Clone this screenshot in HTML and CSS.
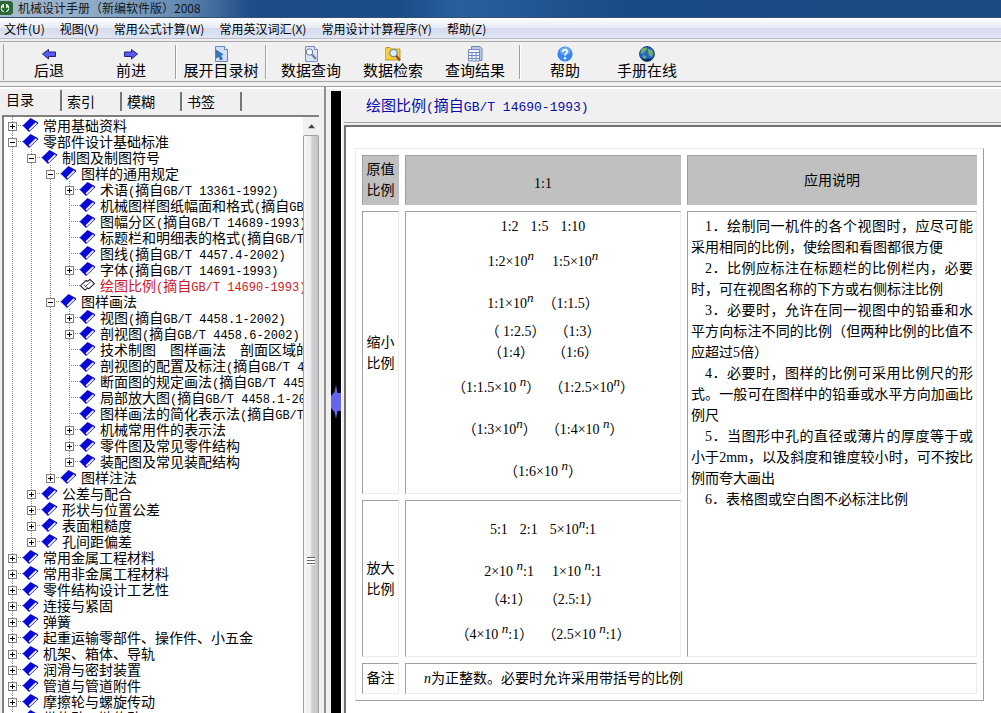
FILE: index.html
```html
<!DOCTYPE html>
<html lang="zh-CN">
<head>
<meta charset="utf-8">
<title>机械设计手册（新编软件版）2008</title>
<link rel="stylesheet" href="styles.css">
</head>
<body>
<svg class="defs" width="0" height="0" aria-hidden="true">
  <symbol id="book" viewBox="0 0 15 14">
    <path d="M7.5 0L15 4.2V5.5L6 14L0 8V7.2Z" fill="#0808d8"/>
    <path d="M6.2 11.8L13.4 4.9" stroke="#fff" stroke-width="1.7"/>
  </symbol>
  <symbol id="book-open" viewBox="0 0 16 14">
    <path d="M0.6 7.8L6.4 2.2L8 3.2L10.6 1L15.4 5.6L9.6 11L8 10.2L5.4 12.4Z" fill="#fff" stroke="#113" stroke-width="1.1"/>
    <path d="M5 9.2L11.5 3.5M8 10.2L4 6.8" stroke="#334" stroke-width="0.8" fill="none"/>
  </symbol>
</svg>

<header class="titlebar">
  <svg class="app-icon" viewBox="0 0 14 16"><path d="M0 1H11L13 3V13L11 15H0Z" fill="#2f6b3a"/><circle cx="5" cy="8" r="5" fill="#dfeedd" stroke="#153d1c"/><path d="M5 4v8M2 8l3 3 3-3" stroke="#1f6a2d" stroke-width="2" fill="none"/></svg>
  <h1>机械设计手册（新编软件版）2008</h1>
</header>

<nav class="menubar">
  <button>文件(U)</button><button>视图(V)</button><button>常用公式计算(W)</button><button>常用英汉词汇(X)</button><button>常用设计计算程序(Y)</button><button>帮助(Z)</button>
</nav>

<div class="toolbar">
  <button><svg viewBox="0 0 16 16"><path d="M1.5 8L7.5 3.5V6H14.5V10.5H7.5V13Z" fill="#5a5af0" stroke="#22227a"/></svg>后退</button>
  <button><svg viewBox="0 0 16 16"><path d="M14.5 8L8.5 3.5V6H1.5V10.5H8.5V13Z" fill="#5a5af0" stroke="#22227a"/></svg>前进</button>
  <i class="sep"></i>
  <button><svg viewBox="0 0 16 16"><path d="M2.5 .5H11.5L14.5 3.5V15.5H2.5Z" fill="#cfe0fa" stroke="#6a86bd"/><path d="M11.5 .5V3.5H14.5" fill="#fff" stroke="#6a86bd"/><path d="M3 4L10 8.5L7.5 9.2L9.5 13L7.5 14L5.8 10.3L3.5 12Z" fill="#2f78c4" stroke="#1b4f92" stroke-width=".6"/></svg>展开目录树</button>
  <i class="sep"></i>
  <button><svg viewBox="0 0 16 16"><path d="M2.5 .5H11.5L14.5 3.5V15.5H2.5Z" fill="#dce5f8" stroke="#7d8dbb"/><path d="M11.5 .5V3.5H14.5" fill="#fff" stroke="#7d8dbb"/><circle cx="6.5" cy="6" r="3.2" fill="#f4f8ff" stroke="#6b7690"/><path d="M9 8.5L13 13" stroke="#76809a" stroke-width="2.4"/></svg>数据查询</button>
  <button><svg viewBox="0 0 16 16"><path d="M0 3L1 1.5H5L6.5 3H15V13L13 14H0Z" fill="#f6ce3c" stroke="#b98912" stroke-width=".8"/><circle cx="8.5" cy="7" r="3.7" fill="#d9edfb" stroke="#7a8ba0" stroke-width="1.2"/><path d="M11.2 9.8L15 14.5" stroke="#8a4b25" stroke-width="2.2"/></svg>数据检索</button>
  <button><svg viewBox="0 0 16 16"><path d="M4.5 .5H13L15 2.5V14.5H4.5Z" fill="#b9c8ea" stroke="#7484ae"/><path d="M1.5 3.5H12.5V15H1.5Z" fill="#f3f6ff" stroke="#7a8bbb"/><path d="M1.5 6.5H12.5M1.5 9.5H12.5M1.5 12.5H12.5M5 6V15M9 6V15" stroke="#7389c4"/></svg>查询结果</button>
  <i class="sep"></i>
  <button><svg viewBox="0 0 16 16"><circle cx="8" cy="8" r="7.6" fill="#3585ee"/><ellipse cx="8" cy="5" rx="5.5" ry="4" fill="#63a9fa"/><path d="M5.7 6C5.7 2.9 10.4 3 10.3 5.8C10.2 7.4 8 7.6 8 9.6" fill="none" stroke="#fff" stroke-width="1.8"/><circle cx="8" cy="12.2" r="1.2" fill="#fff"/></svg>帮助</button>
  <button><svg viewBox="0 0 16 16"><circle cx="8" cy="8" r="7.4" fill="#2468c4" stroke="#123c74"/><path d="M3 12C5 16 11 16 13 12L8 13Z" fill="#0d2a52"/><path d="M2 4C4 1 7 1 8 2L7 5L5 6L4 8L1.5 7Z M9 3L13 4L14.5 8L12 11L10 9L9 6Z M4 9L7 10L6.5 13L4 12Z" fill="#6cae6c"/></svg>手册在线</button>
</div>

<main class="workspace">
  <section class="sidebar">
    <div class="tabs" role="tablist">
      <button role="tab" class="active" aria-selected="true">目录</button><button role="tab">索引</button><button role="tab">模糊</button><button role="tab">书签</button>
    </div>
    <div class="tree-frame">
      <div class="tree-view">
        <ul class="tree">
          <li><div class="row"><button class="tg plus" aria-label="展开"></button><svg><use href="#book"/></svg>常用基础资料</div></li>
          <li><div class="row"><button class="tg" aria-label="折叠"></button><svg><use href="#book"/></svg>零部件设计基础标准</div>
            <ul>
              <li><div class="row"><button class="tg" aria-label="折叠"></button><svg><use href="#book"/></svg>制图及制图符号</div>
                <ul>
                  <li><div class="row"><button class="tg" aria-label="折叠"></button><svg><use href="#book"/></svg>图样的通用规定</div>
                    <ul>
                      <li><div class="row"><button class="tg plus" aria-label="展开"></button><svg><use href="#book"/></svg>术语<code>(</code>摘自<code>GB/T 13361-1992)</code></div></li>
                      <li><div class="row leaf"><svg><use href="#book"/></svg>机械图样图纸幅面和格式<code>(</code>摘自<code>GB/T 14689-1993)</code></div></li>
                      <li><div class="row leaf"><svg><use href="#book"/></svg>图幅分区<code>(</code>摘自<code>GB/T 14689-1993)</code></div></li>
                      <li><div class="row leaf"><svg><use href="#book"/></svg>标题栏和明细表的格式<code>(</code>摘自<code>GB/T 10609-1989)</code></div></li>
                      <li><div class="row leaf"><svg><use href="#book"/></svg>图线<code>(</code>摘自<code>GB/T 4457.4-2002)</code></div></li>
                      <li><div class="row"><button class="tg plus" aria-label="展开"></button><svg><use href="#book"/></svg>字体<code>(</code>摘自<code>GB/T 14691-1993)</code></div></li>
                      <li><div class="row leaf current"><svg><use href="#book-open"/></svg>绘图比例<code>(</code>摘自<code>GB/T 14690-1993)</code></div></li>
                    </ul>
                  </li>
                  <li><div class="row"><button class="tg" aria-label="折叠"></button><svg><use href="#book"/></svg>图样画法</div>
                    <ul>
                      <li><div class="row"><button class="tg plus" aria-label="展开"></button><svg><use href="#book"/></svg>视图<code>(</code>摘自<code>GB/T 4458.1-2002)</code></div></li>
                      <li><div class="row"><button class="tg plus" aria-label="展开"></button><svg><use href="#book"/></svg>剖视图<code>(</code>摘自<code>GB/T 4458.6-2002)</code></div></li>
                      <li><div class="row leaf"><svg><use href="#book"/></svg>技术制图　图样画法　剖面区域的表示法</div></li>
                      <li><div class="row leaf"><svg><use href="#book"/></svg>剖视图的配置及标注<code>(</code>摘自<code>GB/T 4458.6-2002)</code></div></li>
                      <li><div class="row leaf"><svg><use href="#book"/></svg>断面图的规定画法<code>(</code>摘自<code>GB/T 4458.6-2002)</code></div></li>
                      <li><div class="row leaf"><svg><use href="#book"/></svg>局部放大图<code>(</code>摘自<code>GB/T 4458.1-2002)</code></div></li>
                      <li><div class="row leaf"><svg><use href="#book"/></svg>图样画法的简化表示法<code>(</code>摘自<code>GB/T 16675)</code></div></li>
                      <li><div class="row"><button class="tg plus" aria-label="展开"></button><svg><use href="#book"/></svg>机械常用件的表示法</div></li>
                      <li><div class="row"><button class="tg plus" aria-label="展开"></button><svg><use href="#book"/></svg>零件图及常见零件结构</div></li>
                      <li><div class="row"><button class="tg plus" aria-label="展开"></button><svg><use href="#book"/></svg>装配图及常见装配结构</div></li>
                    </ul>
                  </li>
                  <li><div class="row"><button class="tg plus" aria-label="展开"></button><svg><use href="#book"/></svg>图样注法</div></li>
                </ul>
              </li>
              <li><div class="row"><button class="tg plus" aria-label="展开"></button><svg><use href="#book"/></svg>公差与配合</div></li>
              <li><div class="row"><button class="tg plus" aria-label="展开"></button><svg><use href="#book"/></svg>形状与位置公差</div></li>
              <li><div class="row"><button class="tg plus" aria-label="展开"></button><svg><use href="#book"/></svg>表面粗糙度</div></li>
              <li><div class="row"><button class="tg plus" aria-label="展开"></button><svg><use href="#book"/></svg>孔间距偏差</div></li>
            </ul>
          </li>
          <li><div class="row"><button class="tg plus" aria-label="展开"></button><svg><use href="#book"/></svg>常用金属工程材料</div></li>
          <li><div class="row"><button class="tg plus" aria-label="展开"></button><svg><use href="#book"/></svg>常用非金属工程材料</div></li>
          <li><div class="row"><button class="tg plus" aria-label="展开"></button><svg><use href="#book"/></svg>零件结构设计工艺性</div></li>
          <li><div class="row"><button class="tg plus" aria-label="展开"></button><svg><use href="#book"/></svg>连接与紧固</div></li>
          <li><div class="row"><button class="tg plus" aria-label="展开"></button><svg><use href="#book"/></svg>弹簧</div></li>
          <li><div class="row"><button class="tg plus" aria-label="展开"></button><svg><use href="#book"/></svg>起重运输零部件、操作件、小五金</div></li>
          <li><div class="row"><button class="tg plus" aria-label="展开"></button><svg><use href="#book"/></svg>机架、箱体、导轨</div></li>
          <li><div class="row"><button class="tg plus" aria-label="展开"></button><svg><use href="#book"/></svg>润滑与密封装置</div></li>
          <li><div class="row"><button class="tg plus" aria-label="展开"></button><svg><use href="#book"/></svg>管道与管道附件</div></li>
          <li><div class="row"><button class="tg plus" aria-label="展开"></button><svg><use href="#book"/></svg>摩擦轮与螺旋传动</div></li>
          <li><div class="row"><button class="tg plus" aria-label="展开"></button><svg><use href="#book"/></svg>带传动、链传动</div></li>
        </ul>
      </div>
      <div class="scrollbar">
        <button class="up" aria-label="向上滚动"><svg viewBox="0 0 8 5"><path d="M4 0L8 4.5H0Z" fill="#444"/></svg></button>
        <div class="thumb"><i class="grip"></i></div>
      </div>
    </div>
  </section>

  <div class="splitter"><svg viewBox="0 0 11 34"><path d="M5 0L6.5 8H11V26H6.5L5 34L3.5 27L0 23V11L3.5 7Z" fill="#6464ee"/></svg></div>

  <section class="content">
    <h2>绘图比例<code>(</code>摘自<code>GB/T 14690-1993)</code></h2>
    <div class="page">
      <table>
        <colgroup><col class="c1"><col class="c2"><col class="c3"></colgroup>
        <tr class="head">
          <th scope="col">原值<br>比例</th>
          <th scope="col"><p class="tall">1:1</p></th>
          <th scope="col">应用说明</th>
        </tr>
        <tr>
          <th scope="row">缩小<br>比例</th>
          <td class="ratios">
            <p class="mid"><span>1:2</span><span>1:5</span><span>1:10</span></p>
            <p class="tall wide"><span>1:2×10<sup>n</sup></span><span>1:5×10<sup>n</sup></span></p>
            <p class="tall"><span>1:1×10<sup>n</sup></span><span>（1:1.5）</span></p>
            <p><span>（ 1:2.5）</span><span>（1:3）</span></p>
            <p class="wide"><span>（1:4）</span><span>（1:6）</span></p>
            <p class="tall"><span>（1:1.5×10 <sup>n</sup>）</span><span>（1:2.5×10<sup>n</sup>）</span></p>
            <p class="tall"><span>（1:3×10<sup>n</sup>）</span><span>（1:4×10 <sup>n</sup>）</span></p>
            <p class="tall"><span>（1:6×10 <sup>n</sup>）</span></p>
          </td>
          <td class="notes" rowspan="2">
            <p>1．绘制同一机件的各个视图时，应尽可能采用相同的比例，使绘图和看图都很方便</p>
            <p>2．比例应标注在标题栏的比例栏内，必要时，可在视图名称的下方或右侧标注比例</p>
            <p>3．必要时，允许在同一视图中的铅垂和水平方向标注不同的比例（但两种比例的比值不应超过5倍）</p>
            <p>4．必要时，图样的比例可采用比例尺的形式。一般可在图样中的铅垂或水平方向加画比例尺</p>
            <p>5．当图形中孔的直径或薄片的厚度等于或小于2mm，以及斜度和锥度较小时，可不按比例而夸大画出</p>
            <p>6．表格图或空白图不必标注比例</p>
          </td>
        </tr>
        <tr>
          <th scope="row">放大<br>比例</th>
          <td class="ratios">
            <p class="tall mid"><span>5:1</span><span>2:1</span><span>5×10<sup>n</sup>:1</span></p>
            <p class="tall wide"><span>2×10 <sup>n</sup>:1</span><span>1×10 <sup>n</sup>:1</span></p>
            <p class="mid"><span>（4:1）</span><span>（2.5:1）</span></p>
            <p class="tall"><span>（4×10 <sup>n</sup>:1）</span><span>（2.5×10 <sup>n</sup>:1）</span></p>
          </td>
        </tr>
        <tr>
          <th scope="row">备注</th>
          <td class="remark" colspan="2"><em>n</em>为正整数。必要时允许采用带括号的比例</td>
        </tr>
      </table>
    </div>
  </section>
</main>
</body>
</html>
```
FILE: styles.css
```css
* { box-sizing: border-box; }

body {
  margin: 0;
  height: 100vh;
  display: flex;
  flex-direction: column;
  overflow: hidden;
  background: #f0f0f0;
  color: #000;
  font: 14px/16px "Noto Sans CJK SC", sans-serif;
}

button {
  border: 0;
  padding: 0;
  background: none;
  color: inherit;
  font: inherit;
  white-space: nowrap;
}

code { font: 12px/12px "Liberation Mono", monospace; }
.defs { display: none; }

/* title bar */
.titlebar {
  flex: none;
  height: 18px;
  display: flex;
  align-items: center;
  gap: 4px;
  padding-bottom: 2px;
  border-bottom: 1px solid #33506f;
  background: linear-gradient(90deg, #a9bdd0 0, #8fabc6 90px, #6489b1 180px, #1d4c88 250px, #1c4c8a 400px, #2a5f9f 460px, #1b4b87 620px, #1b4a84 100%);
}
.titlebar .app-icon { width: 14px; height: 16px; }
.titlebar h1 { margin: 0; font-size: 12px; font-weight: 400; color: #101820; }

/* menu bar */
.menubar {
  flex: none;
  height: 21px;
  display: flex;
  align-items: center;
  gap: 15px;
  padding-left: 4px;
  border-top: 1px solid #fff;
  border-bottom: 1px solid #b9bfca;
  background: linear-gradient(#fafbfd, #e8ecf6 45%, #d6dcee 50%, #e0e5f3);
  font-size: 12px;
}

/* tool bar */
.toolbar {
  flex: none;
  height: 41px;
  display: flex;
  align-items: center;
  margin-top: 2px;
  padding-left: 8px;
  border-top: 1px solid #a8a8a8;
  border-bottom: 1px solid #a0a0a0;
  background: linear-gradient(#a0a0a0, #a0a0a0) 3px 2px / 1px 36px no-repeat #f0f0f0;
}
.toolbar button {
  width: 82px;
  display: flex;
  flex-direction: column;
  align-items: center;
  font-size: 15px;
}
.toolbar svg { width: 16px; height: 16px; }
.toolbar .sep {
  width: 8px;
  height: 34px;
  background: linear-gradient(90deg, #a0a0a0 50%, #fff 50%) center / 2px 100% no-repeat;
}

/* workspace */
.workspace {
  flex: 1;
  min-height: 0;
  display: flex;
  margin-top: 4px;
  border-top: 1px solid #a0a0a0;
  box-shadow: inset 0 2px #fff;
}
.sidebar {
  flex: none;
  width: 326px;
  display: flex;
  flex-direction: column;
  border-right: 2px solid #909090;
}
.tabs { height: 28px; display: flex; align-items: end; padding: 4px 0; }
.tabs button {
  width: 60px;
  height: 19px;
  padding: 0 0 2px 5px;
  border-right: 2px solid #777;
  text-align: left;
}
.tabs .active { width: 62px; height: 21px; padding: 0 0 4px 6px; }
.tree-frame {
  flex: 1;
  min-height: 0;
  display: flex;
  margin: 0 5px 0 2px;
  border: solid #808080;
  border-width: 2px 0 0 2px;
  background: #fff;
}
.tree-view { flex: 1; min-width: 0; overflow: hidden; }
.tree, .tree ul { margin: 0; padding: 0; list-style: none; }
.tree { padding-left: 4px; }
.tree ul { margin-left: 19px; }
.tree li {
  background: repeating-linear-gradient(#888 0 1px, transparent 1px 2px) 4px 0 / 1px 100% no-repeat;
}
.tree ul > li:last-child { background-size: 1px 8px; }
.row {
  height: 16px;
  white-space: nowrap;
  background: repeating-linear-gradient(90deg, #888 0 1px, transparent 1px 2px) 4px 8px / 12px 1px no-repeat;
}
.row svg { width: 15px; height: 14px; margin: 0 5px 0 6px; vertical-align: -1px; }
.row.leaf svg { margin-left: 15px; }
.row.current { color: #d01828; }
.tg {
  width: 9px;
  height: 9px;
  border: 1px solid #808080;
  vertical-align: 1px;
  background: linear-gradient(#000, #000) center / 5px 1px no-repeat #fff;
}
.tg.plus {
  background: linear-gradient(#000, #000) center / 5px 1px no-repeat,
    linear-gradient(#000, #000) center / 1px 5px no-repeat #fff;
}

/* scroll bar */
.scrollbar { width: 16px; display: flex; flex-direction: column; background: #f0f0f0; }
.scrollbar .up { height: 18px; display: flex; align-items: center; justify-content: center; }
.scrollbar .up svg { width: 7px; height: 5px; }
.thumb {
  flex: 1;
  display: flex;
  flex-direction: column;
  align-items: center;
  border: 1px solid #a0a0a0;
  border-bottom: 0;
  border-radius: 2px 2px 0 0;
  background: linear-gradient(90deg, #f6f6f6, #ececec 50%, #d2d2d4 55%, #c4c4c8);
}
.thumb::before { content: ""; flex: 17; }
.thumb::after { content: ""; flex: 6; }
.grip { width: 8px; height: 8px; background: repeating-linear-gradient(#666 0 1px, #fff 1px 3px); }

/* splitter */
.splitter {
  flex: none;
  width: 10px;
  margin: 4px 0 0 5px;
  display: flex;
  align-items: center;
  justify-content: center;
  background: #000;
}
.splitter svg { flex: none; width: 11px; height: 36px; }

/* document */
.content {
  flex: 1;
  min-width: 0;
  display: flex;
  flex-direction: column;
  padding-top: 4px;
  border-left: 1px solid #fff;
}
.content h2 {
  flex: none;
  height: 32px;
  margin: 0 0 2px 2px;
  padding: 6px 0 0 22px;
  border-bottom: 1px solid #a0a0a0;
  font-size: 15px;
  font-weight: 400;
  color: #0a0aa8;
}
.content h2 code { font-size: 13px; }
.page {
  flex: 1;
  min-height: 0;
  margin-left: 2px;
  padding: 21px 17px 0 9px;
  border: solid #707070;
  border-width: 2px 0 0 2px;
  background: #fff;
}
.page table {
  width: 100%;
  table-layout: fixed;
  border: 1px solid;
  border-color: #ececec #a0a0a0 #a0a0a0 #ececec;
  border-spacing: 6px;
  font: 14px/21px "Liberation Serif", "Noto Sans CJK SC", serif;
}
.c1 { width: 37px; }
.c2 { width: 276px; }
.page th, .page td {
  padding: 4px;
  border: 1px solid;
  border-color: #a0a0a0 #ececec #ececec #a0a0a0;
  font-weight: 400;
}
.page th { padding: 3px 2px; }
.page .head th { background: #c0c0c0; border-color: #a0a0a0 #c0c0c0 #c0c0c0 #a0a0a0; }
.page p { margin: 0; }
.page .tall { padding: 14px 0 7px; }
.ratios p { display: flex; justify-content: center; gap: 9px; white-space: pre; }
.ratios .mid { gap: 12px; }
.ratios .wide { gap: 18px; }
.page sup { font-size: 13px; font-style: italic; line-height: 0; vertical-align: 6px; }
.page .notes { padding: 4px 3px; vertical-align: top; text-align: justify; }
.notes p { text-indent: 14px; }
.page .remark { padding-left: 18px; }
```
